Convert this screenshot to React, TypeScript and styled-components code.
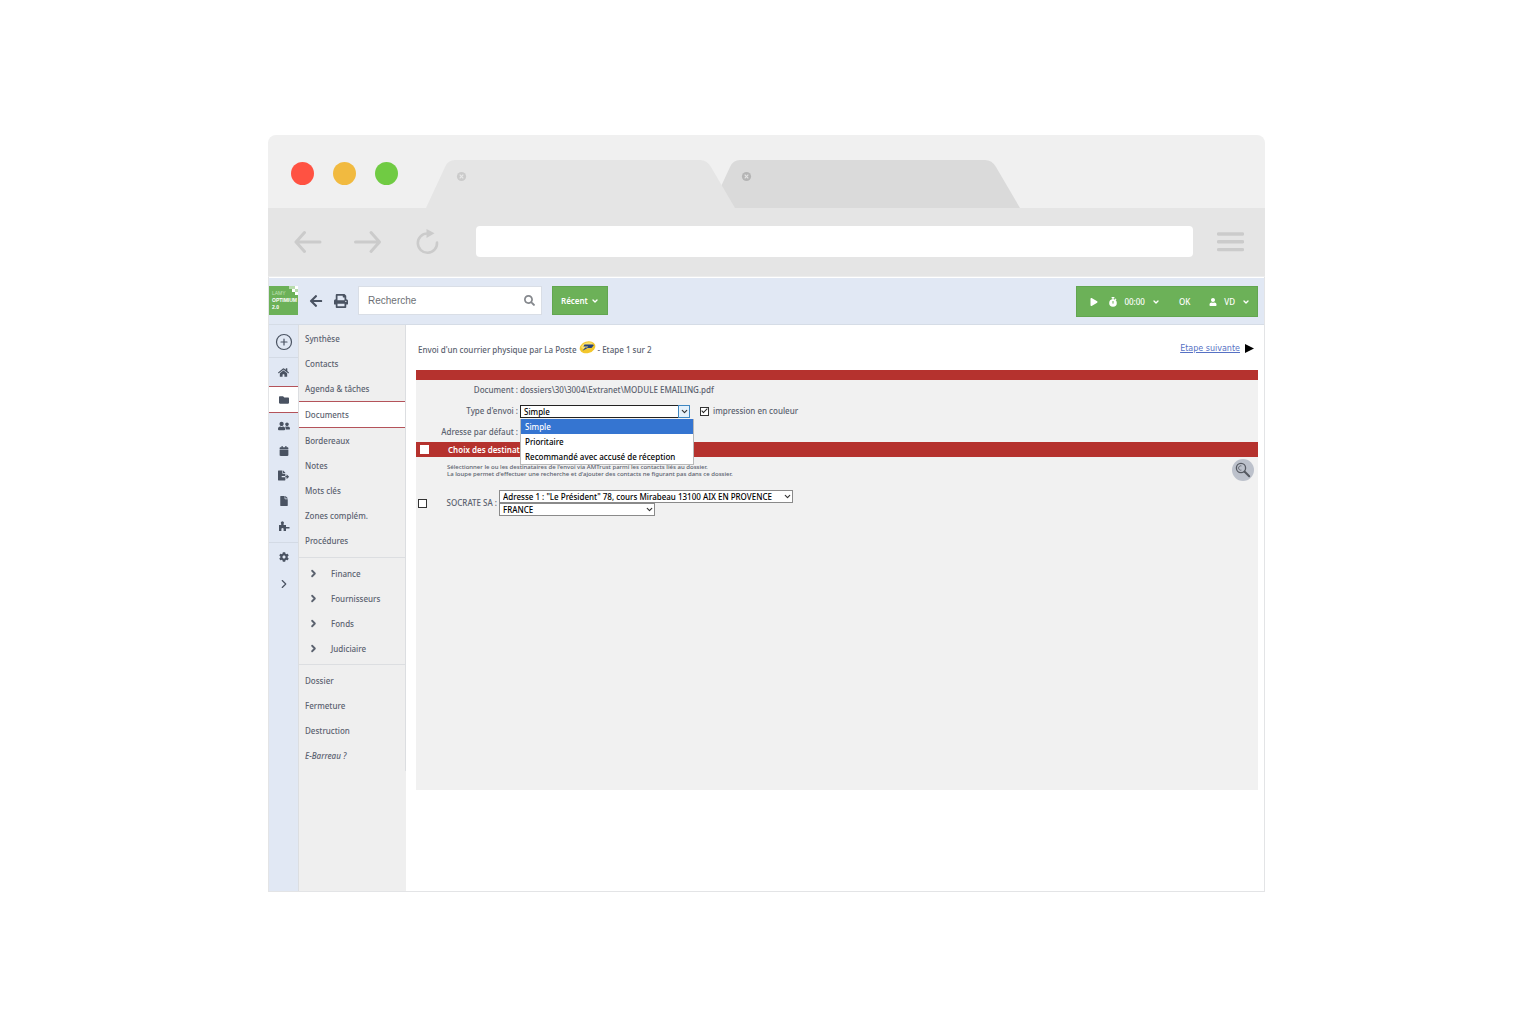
import React from "react";
import styled, { createGlobalStyle, css } from "styled-components";
import { ChevronDown, ChevronRight, CirclePlus } from "lucide-react";
import {
  FaArrowLeft,
  FaCalendar,
  FaCog,
  FaFile,
  FaFileExport,
  FaFolder,
  FaHome,
  FaPlay,
  FaPrint,
  FaSearch,
  FaUser,
  FaUserFriends,
} from "react-icons/fa";

const color = {
  text: "#5b626f",
  icon: "#4a5362",
  red: "#b5322e",
  green: "#6cb158",
  blue: "#e1e8f4",
  grey: "#efefef",
  line: "#dcdee1",
  chrome: "#e5e5e5",
};

const sans = `"Noto Sans", "Open Sans", sans-serif`;

const GlobalStyle = createGlobalStyle`
  *, *::before, *::after { box-sizing: border-box; }
  body { margin: 0; background: #fff; color: ${color.text}; font: 500 8px/12px ${sans}; }
  button, input, select { font: inherit; color: inherit; margin: 0; padding: 0; border: 0; background: none; border-radius: 0; }
  svg { display: block; flex: none; }
  a { color: inherit; text-decoration: none; }
  h1, p, ul { margin: 0; padding: 0; font: inherit; list-style: none; }
`;

const Page = styled.div`
  padding: 135px 19px 132px 16px;
`;

const Browser = styled.div`
  max-width: 997px;
  margin: 0 auto;
`;

const TabStrip = styled.div`
  display: flex;
  align-items: flex-end;
  padding-left: 23px;
  background: #f0f0f0;
  border-radius: 8px 8px 0 0;
`;

const Lights = styled.div`
  display: flex;
  gap: 19px;
  align-self: center;
  padding-top: 4px;
  margin-right: 28px;
`;

const Light = styled.span<{ $tone: string }>`
  width: 23px;
  height: 23px;
  border-radius: 50%;
  background: ${(p) => p.$tone};
`;

const Tab = styled.button<{ $front?: boolean }>`
  position: relative;
  z-index: ${(p) => (p.$front ? 1 : 0)};
  margin: 25px -24px 0 0;
  flex: 0 1 auto;
`;

const Toolbar = styled.div`
  display: flex;
  align-items: center;
  gap: 32px;
  padding: 18px 21px 19px 26px;
  background: ${color.chrome};
  border-bottom: 1px solid #ececec;
`;

const Address = styled.input`
  flex: 1;
  min-width: 0;
  height: 31px;
  margin: 0 -8px 0 2px;
  padding: 0 12px;
  background: #fff;
  border-radius: 4px;
  font-size: 13px;
`;

const Application = styled.div`
  border: solid #e3e4e6;
  border-width: 0 1px 1px;
  padding-top: 1px;
`;

const Header = styled.header`
  display: flex;
  align-items: flex-start;
  height: 47px;
  padding: 8px 6px 0 0;
  background: ${color.blue};
  border-bottom: 1px solid #d5dce6;
`;

const Logo = styled.a`
  position: relative;
  width: 29px;
  height: 29px;
  padding: 4px 0 0 3px;
  background: ${color.green};
  color: #fff;
  font: 700 5px/7px "Liberation Sans", sans-serif;
  overflow: hidden;
  span {
    display: block;
  }
  span:first-child {
    font-weight: 400;
    color: #c4e2ba;
  }
  svg {
    position: absolute;
    top: 0;
    right: 0;
  }
`;

const IconButton = styled.button`
  display: flex;
  align-items: center;
  justify-content: center;
  height: 30px;
  color: ${color.icon};
`;

const HeaderTools = styled.div`
  display: flex;
  gap: 11px;
  margin: 0 10px 0 11px;
`;

const Search = styled.form`
  display: flex;
  align-items: center;
  width: 184px;
  height: 29px;
  padding: 0 6px 0 9px;
  background: #fff;
  border: 1px solid #d9dee6;
  color: #85888d;
`;

const SearchInput = styled.input`
  flex: 1;
  min-width: 0;
  color: #6d7075;
  font: 10px/14px "Liberation Sans", sans-serif;
  &::placeholder {
    color: inherit;
    opacity: 1;
  }
`;

const greenBox = css`
  display: flex;
  align-items: center;
  background: ${color.green};
  border: 1px solid #62a650;
  color: #fff;
`;

const Recent = styled.button`
  ${greenBox}
  gap: 3px;
  height: 29px;
  margin-left: 10px;
  padding: 0 8px;
  font-weight: 600;
`;

const Session = styled.div`
  ${greenBox}
  height: 31px;
  margin-left: auto;
  padding: 0 7px 0 13px;
  gap: 19px;
`;

const SessionButton = styled.button<{ $lead?: boolean }>`
  display: flex;
  align-items: center;
  gap: 7px;
  margin-right: ${(p) => (p.$lead ? -8 : 0)}px;
`;

const Body = styled.div`
  display: grid;
  grid-template-columns: 30px 107px minmax(0, 1fr);
  min-height: 566px;
`;

const Rail = styled.nav`
  background: ${color.blue};
  border-right: 1px solid ${color.line};
`;

const activeRow = css`
  height: 27px;
  background: #fff;
  border-top: 1px solid #b4535a;
  border-bottom: 1px solid #b4535a;
`;

const RailLink = styled.a<{ $active?: boolean; $tall?: boolean }>`
  display: flex;
  align-items: center;
  justify-content: center;
  height: ${(p) => (p.$tall ? 28 : 25)}px;
  color: ${color.icon};
  ${(p) => p.$active && activeRow}
`;

const RailGroup = styled.div<{ $first?: boolean }>`
  padding: ${(p) => (p.$first ? "3px 0 1px" : "0 0 4px")};
  border-bottom: 1px solid #d3dae5;
`;

const Menu = styled.nav`
  background: ${color.grey};
`;

const MenuInner = styled.div`
  border-right: 1px solid ${color.line};
`;

const MenuGroup = styled.ul`
  padding: 3px 0;
  & + & {
    border-top: 1px solid ${color.line};
  }
  &:first-child {
    padding: 1px 0 4px;
  }
`;

const MenuLink = styled.a<{ $active?: boolean; $nested?: boolean; $italic?: boolean }>`
  display: flex;
  align-items: center;
  gap: 12px;
  height: 25px;
  padding-left: ${(p) => (p.$nested ? 9 : 6)}px;
  font-style: ${(p) => (p.$italic ? "italic" : "normal")};
  ${(p) => p.$active && activeRow}
`;

const Main = styled.main`
  padding: 0 6px 40px 10px;
`;

const TitleRow = styled.div`
  display: flex;
  align-items: center;
  justify-content: space-between;
  height: 45px;
  padding: 5px 4px 0 2px;
`;

const Title = styled.h1`
  display: flex;
  align-items: center;
  gap: 2px;
  svg {
    margin-bottom: 6px;
  }
`;

const NextLink = styled.a`
  display: flex;
  align-items: center;
  gap: 5px;
  color: #5671c4;
  font: 8px/12px "DejaVu Sans", sans-serif;
  padding-bottom: 3px;
  span {
    text-decoration: underline;
  }
  svg {
    color: #000;
  }
`;

const Panel = styled.form`
  min-height: 420px;
  background: #f1f1f1;
  border-top: 10px solid ${color.red};
`;

const Fields = styled.div`
  display: grid;
  grid-template-columns: 102px minmax(0, 1fr);
  column-gap: 2px;
  grid-template-rows: 20px 22px 20px;
  align-items: center;
  & > :nth-child(odd) {
    text-align: right;
  }
`;

const TypeCell = styled.div`
  position: relative;
  display: flex;
  align-items: center;
  gap: 10px;
`;

const SelectBox = styled.div<{ $width: number; $focus?: boolean }>`
  position: relative;
  width: ${(p) => p.$width}px;
  height: 13px;
  select {
    appearance: none;
    display: block;
    width: 100%;
    height: 100%;
    padding: 0 12px 0 3px;
    border: 1px solid ${(p) => (p.$focus ? "#222" : "#8a8a8a")};
    background: #fff;
    color: #000;
    line-height: 11px;
  }
`;

const Arrow = styled.span<{ $focus?: boolean }>`
  position: absolute;
  top: 0;
  right: 0;
  display: flex;
  align-items: center;
  justify-content: center;
  width: 12px;
  height: 13px;
  color: #333;
  pointer-events: none;
  ${(p) => p.$focus && "background: #e5f1fb; border: 1px solid #3f86c0;"}
`;

const Options = styled.ul`
  position: absolute;
  z-index: 2;
  top: 14px;
  left: 0;
  width: 174px;
  background: #fff;
  border: 1px solid #b9b9b9;
  border-top: 0;
`;

const Option = styled.li<{ $selected?: boolean }>`
  padding-left: 4px;
  color: ${(p) => (p.$selected ? "#fff" : "#000")};
  background: ${(p) => (p.$selected ? "#3575d1" : "transparent")};
  line-height: 15px;
`;

const Check = styled.input.attrs({ type: "checkbox" })`
  appearance: none;
  position: relative;
  flex: none;
  width: 9px;
  height: 9px;
  background: #fff;
  border: 1px solid #333;
  &:checked::after {
    content: "";
    position: absolute;
    left: 2px;
    top: -1px;
    width: 3px;
    height: 6px;
    border: solid #222;
    border-width: 0 1px 1px 0;
    transform: rotate(45deg);
  }
`;

const CheckLabel = styled.label`
  display: flex;
  align-items: center;
  gap: 4px;
`;

const SectionBar = styled.label`
  display: flex;
  align-items: center;
  gap: 19px;
  height: 15px;
  padding-left: 4px;
  background: ${color.red};
  color: #fff;
  font-weight: 600;
  input {
    border-color: #fff;
  }
`;

const Help = styled.div`
  display: flex;
  justify-content: space-between;
  padding: 2px 4px 0 31px;
  font-size: 6px;
  line-height: 7px;
  p {
    padding-top: 5px;
  }
`;

const LookupButton = styled.button`
  display: flex;
  align-items: center;
  justify-content: center;
  width: 22px;
  height: 22px;
  border-radius: 50%;
  background: #bcc1cb;
`;

const Recipient = styled.div`
  display: flex;
  align-items: center;
  gap: 2px;
  padding: 9px 0 0 2px;
`;

const RecipientLabel = styled.label`
  display: flex;
  align-items: center;
  justify-content: space-between;
  width: 79px;
`;

const TabShape = ({ fill, dot, mark }: { fill: string; dot: string; mark: string }) => (
  <svg width="309" height="48" viewBox="0 0 309 48">
    <path fill={fill} d="M0 48 19 7Q22 0 29 0H274Q281 0 285 7L309 48Z" />
    <circle cx="35.5" cy="16.5" r="4.6" fill={dot} />
    <path d="m33.7 14.7 3.6 3.6m0-3.6-3.6 3.6" stroke={mark} strokeWidth="1.2" />
  </svg>
);

const chromeStroke = {
  fill: "none",
  stroke: "#cbcbcb",
  strokeWidth: 3,
  strokeLinecap: "round" as const,
  strokeLinejoin: "round" as const,
};

const PosteLogo = () => (
  <svg width="17" height="15" viewBox="0 0 17 15" aria-label="La Poste" role="img">
    <ellipse cx="8.5" cy="7.3" rx="8" ry="5.8" transform="rotate(-18 8.5 7.3)" fill="#f3c72c" />
    <ellipse cx="8" cy="5.6" rx="6" ry="3" transform="rotate(-18 8 5.6)" fill="#f9df6f" />
    <path d="M5.500 4.500h8q2 .3.700 1.600L12.500 8H8.800L3.500 10.800 6.200 7.600h2l1-1H4.400Z" fill="#26437e" />
  </svg>
);

const PlugIcon = () => (
  <svg width="12" height="10" viewBox="0 0 12 10" fill="currentColor">
    <path d="M1 4h2.200V2.800a1.500 1.500 0 1 1 2.400 0V4H8v2h3.500v1.400H8V10H5.600V8a1.100 1.100 0 0 0-2.200 0v2H1Z" />
  </svg>
);

const StopwatchIcon = () => (
  <svg width="8" height="10" viewBox="0 0 8 10">
    <circle cx="4" cy="6" r="3.8" fill="currentColor" />
    <path d="M2.6 0h2.8v1.3H4.6V3H3.4V1.3h-.8ZM6.4 1.4l1.1 1-.8.9-1-1Z" fill="currentColor" />
    <path d="M4 4v2.6" stroke={color.green} strokeWidth="1" />
  </svg>
);

const LoupeIcon = () => (
  <svg width="16" height="16" viewBox="0 0 16 16" fill="none" stroke="#555961">
    <circle cx="6" cy="6" r="4.6" strokeWidth="1.3" />
    <path d="M6.4 3.9a2.2 2.2 0 1 0 0 4.2" strokeWidth=".8" />
    <path d="m9.5 9.5 4.7 4.7" strokeWidth="2" strokeLinecap="round" />
  </svg>
);

const documentsMenu = [
  "Synthèse",
  "Contacts",
  "Agenda & tâches",
  "Documents",
  "Bordereaux",
  "Notes",
  "Mots clés",
  "Zones complém.",
  "Procédures",
];
const nestedMenu = ["Finance", "Fournisseurs", "Fonds", "Judiciaire"];
const fileMenu = ["Dossier", "Fermeture", "Destruction", "E-Barreau ?"];

const railItems = [
  { name: "Accueil", icon: <FaHome size={11} /> },
  { name: "Dossiers", icon: <FaFolder size={10} /> },
  { name: "Contacts", icon: <FaUserFriends size={12} /> },
  { name: "Agenda", icon: <FaCalendar size={10} /> },
  { name: "Export", icon: <FaFileExport size={11} /> },
  { name: "Fichiers", icon: <FaFile size={10} /> },
  { name: "Extensions", icon: <PlugIcon /> },
];

export default function App() {
  return (
    <Page>
      <GlobalStyle />
      <Browser>
        <TabStrip>
          <Lights>
            <Light $tone="#ff5242" />
            <Light $tone="#f1ba40" />
            <Light $tone="#70cb43" />
          </Lights>
          <Tab $front aria-label="Onglet 1">
            <TabShape fill={color.chrome} dot="#cbcbcb" mark="#e8e8e8" />
          </Tab>
          <Tab aria-label="Onglet 2">
            <TabShape fill="#dadada" dot="#b5b5b5" mark="#e3e3e3" />
          </Tab>
        </TabStrip>
        <Toolbar>
          <button aria-label="Page précédente">
            <svg width="28" height="24" viewBox="0 0 28 24" {...chromeStroke}>
              <path d="M26 12H2M10.500 2.500 2 12l8.500 9.500" />
            </svg>
          </button>
          <button aria-label="Page suivante">
            <svg width="28" height="24" viewBox="0 0 28 24" {...chromeStroke}>
              <path d="M1.500 12h24M17 2.500l8.500 9.500-8.500 9.500" />
            </svg>
          </button>
          <button aria-label="Actualiser">
            <svg width="28" height="26" viewBox="0 0 28 26" {...chromeStroke}>
              <path d="M13.500 4.500A9.600 9.600 0 1 0 23 13.500" strokeWidth="2.600" />
              <path d="m12.500 0 8 4.300-8 4.700Z" fill="#cbcbcb" stroke="none" />
            </svg>
          </button>
          <Address aria-label="Adresse" />
          <button aria-label="Menu">
            <svg width="27" height="20" viewBox="0 0 27 20" {...chromeStroke}>
              <path d="M1.500 2h24M1.500 9.800h24M1.500 17.600h24" strokeWidth="3.400" />
            </svg>
          </button>
        </Toolbar>

        <Application>
          <Header>
            <Logo href="#">
              <span>LAMY</span>
              <span>OPTIMIUM</span>
              <span>2.0</span>
              <svg width="12" height="10" viewBox="0 0 12 10">
                <path fill="#fff" d="M9 0h3v3H9zM6 3h3v3H6zM9 6h3v3H9z" />
                <path fill="#b9dcae" d="M3 0h3v3H3zM6 0h3v3H6zM9 3h3v3H9z" />
              </svg>
            </Logo>
            <HeaderTools>
              <IconButton aria-label="Retour">
                <FaArrowLeft size={14} />
              </IconButton>
              <IconButton aria-label="Imprimer">
                <FaPrint size={14} />
              </IconButton>
            </HeaderTools>
            <Search>
              <SearchInput type="search" placeholder="Recherche" aria-label="Recherche" />
              <FaSearch size={11} />
            </Search>
            <Recent>
              Récent <ChevronDown size={8} strokeWidth={4} />
            </Recent>
            <Session>
              <SessionButton $lead aria-label="Démarrer">
                <FaPlay size={8} />
              </SessionButton>
              <SessionButton>
                <StopwatchIcon />
                00:00
                <ChevronDown size={8} strokeWidth={4} />
              </SessionButton>
              <SessionButton>OK</SessionButton>
              <SessionButton>
                <FaUser size={8} />
                VD
                <ChevronDown size={8} strokeWidth={4} />
              </SessionButton>
            </Session>
          </Header>

          <Body>
            <Rail>
              <RailGroup $first>
                <RailLink href="#" $tall aria-label="Ajouter">
                  <CirclePlus size={18} strokeWidth={1.6} />
                </RailLink>
              </RailGroup>
              <RailGroup>
                {railItems.map((item, i) => (
                  <RailLink key={item.name} href="#" aria-label={item.name} $tall={i === 0} $active={i === 1}>
                    {item.icon}
                  </RailLink>
                ))}
              </RailGroup>
              <RailLink href="#" $tall aria-label="Paramètres">
                <FaCog size={10} />
              </RailLink>
              <RailLink href="#" aria-label="Déplier">
                <ChevronRight size={14} strokeWidth={2} />
              </RailLink>
            </Rail>

            <Menu>
              <MenuInner>
                <MenuGroup>
                  {documentsMenu.map((name) => (
                    <li key={name}>
                      <MenuLink href="#" $active={name === "Documents"}>
                        {name}
                      </MenuLink>
                    </li>
                  ))}
                </MenuGroup>
                <MenuGroup>
                  {nestedMenu.map((name) => (
                    <li key={name}>
                      <MenuLink href="#" $nested>
                        <ChevronRight size={11} strokeWidth={4} />
                        {name}
                      </MenuLink>
                    </li>
                  ))}
                </MenuGroup>
                <MenuGroup>
                  {fileMenu.map((name) => (
                    <li key={name}>
                      <MenuLink href="#" $italic={name.startsWith("E-")}>
                        {name}
                      </MenuLink>
                    </li>
                  ))}
                </MenuGroup>
              </MenuInner>
            </Menu>

            <Main>
              <TitleRow>
                <Title>
                  Envoi d'un courrier physique par La Poste <PosteLogo /> - Etape 1 sur 2
                </Title>
                <NextLink href="#">
                  <span>Etape suivante</span>
                  <svg width="9" height="9" viewBox="0 0 9 9">
                    <path d="M0 0 9 4.5 0 9Z" fill="currentColor" />
                  </svg>
                </NextLink>
              </TitleRow>
              <Panel>
                <Fields>
                  <span>Document :</span>
                  <span>dossiers\30\3004\Extranet\MODULE EMAILING.pdf</span>
                  <label htmlFor="type">Type d'envoi :</label>
                  <TypeCell>
                    <SelectBox $width={170} $focus>
                      <select id="type" defaultValue="Simple">
                        <option>Simple</option>
                        <option>Prioritaire</option>
                        <option>Recommandé avec accusé de réception</option>
                      </select>
                      <Arrow $focus>
                        <ChevronDown size={9} strokeWidth={3} />
                      </Arrow>
                    </SelectBox>
                    <CheckLabel>
                      <Check defaultChecked />
                      impression en couleur
                    </CheckLabel>
                    <Options role="listbox" aria-label="Type d'envoi">
                      <Option role="option" aria-selected $selected>
                        Simple
                      </Option>
                      <Option role="option">Prioritaire</Option>
                      <Option role="option">Recommandé avec accusé de réception</Option>
                    </Options>
                  </TypeCell>
                  <span>Adresse par défaut :</span>
                </Fields>
                <SectionBar>
                  <Check />
                  Choix des destinat
                </SectionBar>
                <Help>
                  <p>
                    Sélectionner le ou les destinataires de l'envoi via AMTrust parmi les contacts liés au dossier.
                    <br />
                    La loupe permet d'effectuer une recherche et d'ajouter des contacts ne figurant pas dans ce dossier.
                  </p>
                  <LookupButton type="button" aria-label="Rechercher un contact">
                    <LoupeIcon />
                  </LookupButton>
                </Help>
                <Recipient>
                  <RecipientLabel>
                    <Check />
                    SOCRATE SA :
                  </RecipientLabel>
                  <div>
                    <SelectBox $width={294}>
                      <select aria-label="Adresse">
                        <option>Adresse 1 : "Le Président" 78, cours Mirabeau 13100 AIX EN PROVENCE</option>
                      </select>
                      <Arrow>
                        <ChevronDown size={9} strokeWidth={3} />
                      </Arrow>
                    </SelectBox>
                    <SelectBox $width={156}>
                      <select aria-label="Pays">
                        <option>FRANCE</option>
                      </select>
                      <Arrow>
                        <ChevronDown size={9} strokeWidth={3} />
                      </Arrow>
                    </SelectBox>
                  </div>
                </Recipient>
              </Panel>
            </Main>
          </Body>
        </Application>
      </Browser>
    </Page>
  );
}
